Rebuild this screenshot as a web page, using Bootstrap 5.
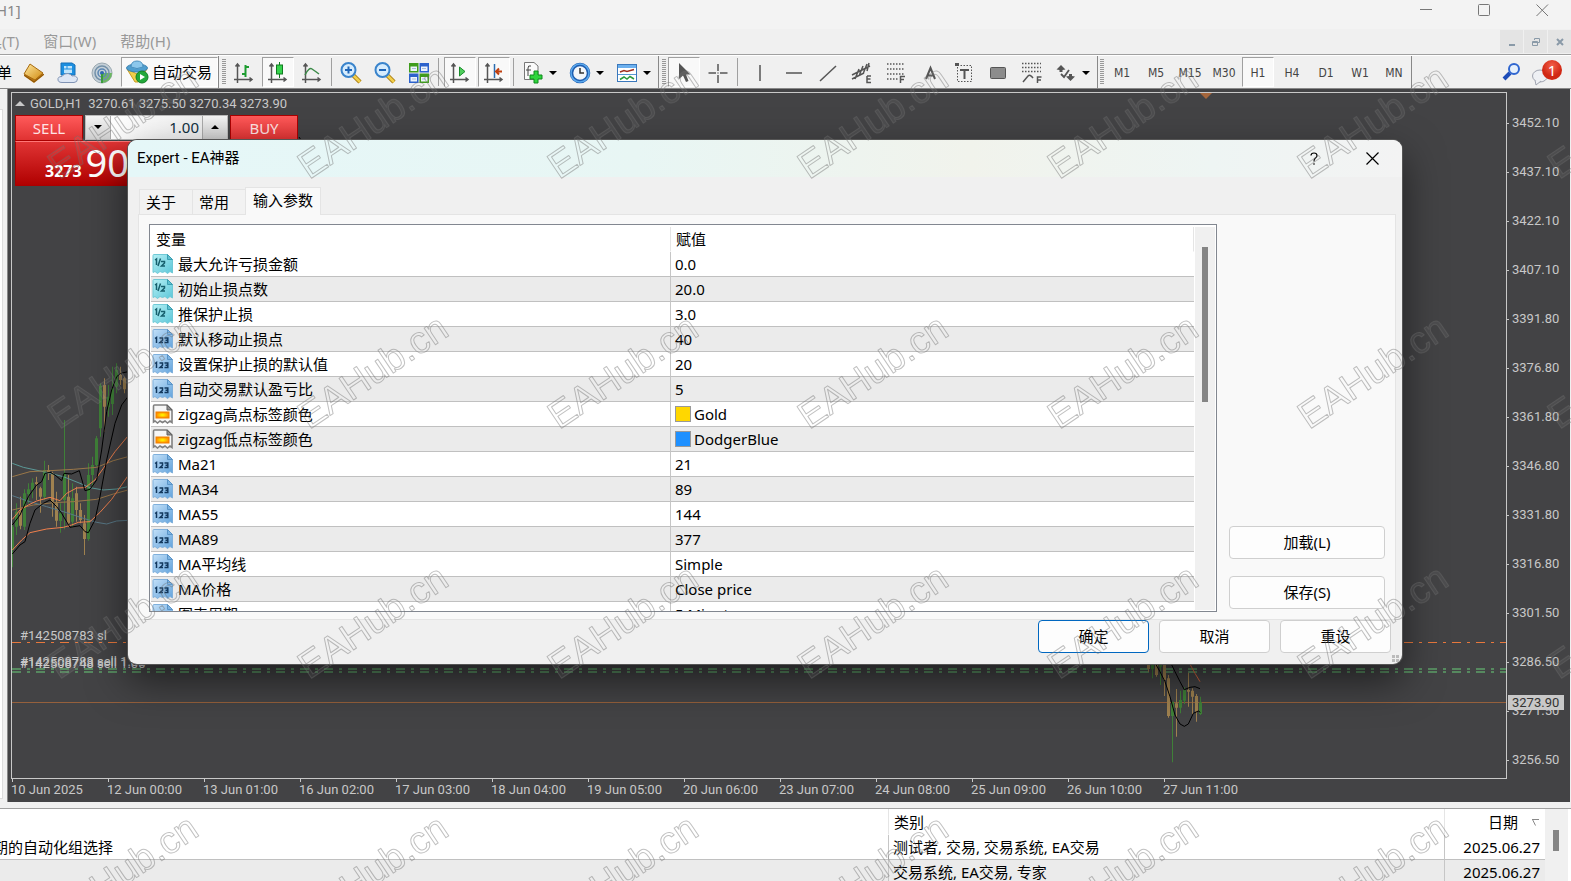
<!DOCTYPE html>
<html lang="zh-CN">
<head>
<meta charset="utf-8">
<meta name="viewport" content="width=device-width, initial-scale=1">
<title>GOLD,H1</title>
<link href="https://cdn.jsdelivr.net/npm/bootstrap@5.3.0/dist/css/bootstrap.min.css" rel="stylesheet">
<style>
:root { --ui: "Noto Sans", "Noto Sans CJK SC", sans-serif; --axis: Roboto, "Noto Sans CJK SC", sans-serif; --line: #a0a0a0; --silver: #c8c8c8; }
body { font: 15px/20px var(--ui); background: #f0f0f0; color: #000; }
button, input { font: inherit; color: inherit; }
svg { display: block; }
.titlebar { height: 29px; background: #f3f3f3; color: #888; }
.titlebar .caption { text-indent: -4px; }
.wbtn { width: 58px; height: 20px; border: 0; background: none; padding: 0; display: grid; place-items: center; }
.menubar { height: 25px; color: #999; padding-left: 2px; gap: 24px; }
.menubar a { color: inherit; text-decoration: none; }
.menubar .cut { margin-left: -15px; }
.mdi { width: 24px; height: 24px; background: #e4e4e4; border: 1px solid #f0f0f0; border-width: 1px 0 0 1px; padding: 0; display: grid; place-items: center; }
.toolbar { height: 35px; border-top: 1px solid var(--line); border-bottom: 1px solid #888; box-shadow: inset 0 1px #fff; padding-top: 1px; }
.tool { width: 34px; height: 32px; flex: none; border: 0; background: none; padding: 2px 0 0; display: flex; align-items: center; justify-content: center; }
.tool.drop { width: 47px; gap: 4px; padding-right: 1px; }
.tool.drop::after { content: ""; border: 4px solid transparent; border-top-color: #000; border-bottom: 0; }
.tool.pressed { margin: 1px 1px; width: 32px; height: 30px; background: #f9f9f9; border: 1px solid var(--line); border-right-color: #fff; border-bottom-color: #fff; }
.tool.auto { width: 97px; margin: 1px 0 1px 2px; gap: 3px; padding: 0 2px 0 0; }
.tool.tf { font: 12px/16px "DejaVu Sans Condensed", sans-serif; color: #444; }
.vsep { width: 5px; height: 28px; flex: none; background: linear-gradient(var(--line), var(--line)) 2px 0 / 1px 100% no-repeat; }
.gend { width: 1px; align-self: stretch; flex: none; background: #888; }
.grip { width: 4px; height: 26px; margin: 0 1px 0 3px; flex: none; background: repeating-linear-gradient(#999 0 1px, #f0f0f0 1px 2px); }
.edge { width: 8px; border-right: 1px solid #888; padding: 20px 0 3px; }
.edge div { width: 3px; height: 100%; background: #fff; border: 1px solid #ddd; border-left: 0; }
.chart { background: #434345; display: grid; grid-template-columns: minmax(0, 1fr) 63px; grid-template-rows: minmax(0, 1fr) 23px; padding: 3px 0 0 3px; font: 13px/16px var(--axis); color: var(--silver); margin-right: 1px; }
.plot { border: 1px solid var(--silver); position: relative; overflow: hidden; }
.plot > svg { position: absolute; inset: 0; width: 100%; height: 100%; }
.plot text { fill: var(--silver); font: 13px var(--axis); }
.quote { height: 22px; padding: 0 3px; gap: 5px; position: relative; white-space: pre; }
.quote::before { content: ""; border: 5px solid transparent; border-bottom-color: var(--silver); border-top: 0; }
.trade { position: relative; padding-left: 3px; }
.deal { width: 68px; height: 26px; border: 1px solid #a00; background: linear-gradient(#ff5a5a, #e03232); color: #ffe3e3; padding: 0; font: 15px/20px var(--ui); }
.spin { width: 143px; height: 25px; border: 1px solid #bbb; margin: 0 2px; }
.spin button { width: 24px; border: 0; background: linear-gradient(#f4f4f4, #cfcfcf); padding: 0; display: grid; place-items: center; }
.spin input { min-width: 0; flex: 1; border: 1px solid #aaa; border-width: 0 1px; background: linear-gradient(90deg, #fff, #eee); text-align: right; padding: 0 3px; color: #103040; font: 15px/20px var(--ui); }
.bid { width: 141px; height: 45px; background: linear-gradient(#e03434, #b00000); border: 1px solid #a00; border-top-color: #f77; color: #fff; padding: 0 0 0 29px; gap: 4px; }
.bid b { font: 700 16px/20px var(--ui); padding-top: 20px; line-height: 19px; }
.bid span { font: 38px/40px var(--ui); }
.prices { padding-top: 7px; position: relative; }
.prices li { height: 49px; padding-left: 5px; position: relative; display: flex; align-items: center; }
.prices li::before { content: ""; position: absolute; left: 0; top: 24px; width: 2px; height: 1px; background: var(--silver); }
.last { position: absolute; top: 603px; left: 1px; width: 56px; background: var(--silver); color: #333; padding-left: 4px; line-height: 15px; }
.times { grid-column: 1 / -1; overflow: hidden; }
.times li { width: 96px; flex: none; position: relative; padding-top: 3px; white-space: nowrap; }
.times li::before { content: ""; position: absolute; left: 1px; top: 0; width: 1px; height: 3px; background: var(--silver); }
.library { height: 73px; margin-top: 6px; border-top: 1px solid var(--line); background: #fff; overflow: hidden; }
.library table, .params { table-layout: fixed; width: 100%; border-collapse: separate; border-spacing: 0; }
.library th, .library td, .params th, .params td { font-weight: 400; padding: 0 4px; height: 25px; line-height: 24px; white-space: nowrap; overflow: hidden; border-bottom: 1px solid #c0c0c0; }
.library th, .params th { border-bottom-color: transparent; padding: 0 5px; }
.library th { height: 26px; padding-top: 1px; }
.library td + td, .library th + th, .params th + th, .params td + td { border-left: 1px solid #c6c6c6; }
.library th + th { border-left-color: #e5e5e5; }
.library td.text-end { padding-right: 5px; }
.library tbody tr:nth-child(even), .params tbody tr:nth-child(even) { background: #ebebeb; }
.library .cut { text-indent: -11px; }
.barcol { width: 26px; background: #f0f0f0; padding: 21px 0 0 8px; border-right: 3px solid #fff; }
.barcol div { width: 6px; height: 21px; background: #858585; }
.dialog { position: absolute; top: 140px; left: 128px; right: 169px; background: #f0f0f0; border-radius: 9px; box-shadow: 0 0 0 1px #555, 0 16px 40px rgba(0, 0, 0, .55); overflow: hidden; }
.dlg-head { height: 37px; padding: 0 1px 1px 9px; font: 15px/20px var(--axis); background: linear-gradient(90deg, #e5f7f8 0, #e8f6f4 40%, #f1f3ec 66%, #eef5f3 85%, #f3f3f3); }
.dlg-head button { width: 58px; height: 32px; border: 0; background: none; padding: 0; display: grid; place-items: center; }
.dlg-body { padding: 10px 6px 0 10px; }
.tabs { padding-left: 1px; }
.tabs button { border: 1px solid #e4e4e4; border-bottom: 0; background: #f2f2f2; height: 25px; width: 54px; padding: 0 0 0 6px; text-align: left; margin-right: -1px; line-height: 22px; }
.tabs button.active { background: #f9f9f9; height: 28px; width: 76px; margin-bottom: -1px; position: relative; padding: 0 0 4px 7px; }
.pane { background: #f9f9f9; border: 1px solid #e4e4e4; padding: 9px 10px 7px; gap: 12px; }
.list { height: 388px; border: 1px solid #828790; background: #fff; padding: 2px 1px 1px; overflow: hidden; }
.params th:first-child { width: 519px; }
.params td:first-child { padding-left: 1px; }
.params .nm { display: flex; align-items: center; gap: 4px; height: 24px; }
.params .nm svg { width: 22px; height: 20px; flex: none; }
.swatch { width: 16px; height: 16px; border: 1px solid #999; display: inline-block; vertical-align: -2px; margin-right: 3px; }
.params thead th:last-child { border-left-color: #e5e5e5; border-right: 1px solid #e5e5e5; }
.scroll { width: 20px; flex: none; background: #f0f0f0; margin-left: 1px; padding: 20px 0 0 7px; }
.scroll div { width: 6px; height: 155px; background: #858585; }
.side { width: 156px; flex: none; gap: 17px; padding-bottom: 3px; }
.push { height: 33px; border: 1px solid #cfcfcf; border-radius: 4px; background: #fdfdfd; padding: 0 0 2px; }
.push.def { border-color: #0067c0; }
.dlg-foot { padding: 0 11px 11px; gap: 10px; }
.dlg-foot .push { width: 111px; }
.sizer { position: absolute; right: 2px; bottom: 1px; }
.stamp { position: absolute; inset: 0; width: 100%; height: 100%; pointer-events: none; }
.stamp text { font: 38px "Liberation Sans", sans-serif; fill: rgba(255, 255, 255, .05); stroke: rgba(105, 105, 105, .42); stroke-width: 1; stroke-linejoin: round; }
</style>
<script src="https://cdn.jsdelivr.net/npm/bootstrap@5.3.0/dist/js/bootstrap.bundle.min.js"></script>
</head>
<body class="vh-100 d-flex flex-column overflow-hidden position-relative">

<svg width="0" height="0" class="position-absolute" aria-hidden="true">
  <defs>
    <linearGradient id="gBlue" x1="0" y1="0" x2="1" y2="1"><stop offset="0" stop-color="#c3e0f8"/><stop offset="1" stop-color="#62a3dc"/></linearGradient>
    <linearGradient id="gCyan" x1="0" y1="0" x2="1" y2="1"><stop offset="0" stop-color="#b4f0f5"/><stop offset="1" stop-color="#5cc6d8"/></linearGradient>
    <linearGradient id="gGold" x1="0" y1="0" x2="1" y2="1"><stop offset="0" stop-color="#ffe9a0"/><stop offset="1" stop-color="#d08a10"/></linearGradient>
    <radialGradient id="gSun"><stop offset="0" stop-color="#ff0"/><stop offset="1" stop-color="#ff8a00"/></radialGradient>
    <radialGradient id="gRed" cy=".3"><stop offset="0" stop-color="#f4604a"/><stop offset="1" stop-color="#d02814"/></radialGradient>
    <symbol id="i123" viewBox="0 0 22 20">
      <path d="M1 1.500Q1 .5 2 .5H15.500L20.500 5.500V19L18 17.500 15.500 19.500 13 17.500 10.500 18.500 8 17.500 5.500 19.500 3 17.500 1 18.500Z" fill="url(#gBlue)" stroke="#7fb0dc"/>
      <path d="M15.500 .5V5.500H20.500Z" fill="#7db4e2" stroke="#5a94c8"/>
      <path d="M3 9.500 4.500 8.500V14M7.500 9H10.500V11.200L8 13.500H11M12.500 9H15.800V13.500H12.500M13.500 11.200H15.500" fill="none" stroke="#12385e" stroke-width="1.500"/>
    </symbol>
    <symbol id="iHalf" viewBox="0 0 22 20">
      <path d="M1 1.500Q1 .5 2 .5H15.500L20.500 5.500V19L18 17.500 15.500 19.500 13 17.500 10.500 18.500 8 17.500 5.500 19.500 3 17.500 1 18.500Z" fill="url(#gCyan)" stroke="#6fc9d6"/>
      <path d="M15.500 .5V5.500H20.500Z" fill="#5fc0d0" stroke="#3a9fb2"/>
      <path d="M3 6 4.500 5V11M8.500 4.500 6 12M9 7.500H12.500V9L9.500 12H13" fill="none" stroke="#17606e" stroke-width="1.500"/>
    </symbol>
    <symbol id="iColor" viewBox="0 0 22 20">
      <path d="M1.500 2Q1.500 1 2.500 1H15L20 6V18.500L18 17 15.500 19 13 17 10.500 18.500 8 17 5.500 19 3 17 1.500 18Z" fill="#f6f6f6" stroke="#808080" stroke-width="1.600"/>
      <path d="M15 1V6H20Z" fill="#909090" stroke="#606060"/>
      <rect x="4" y="8" width="13" height="6" fill="url(#gSun)" stroke="#f08000"/>
    </symbol>
    <symbol id="axes" viewBox="0 0 24 24"><path d="M5.500 3V22M2 18.500H20M3.500 5.500 5.500 3 7.500 5.500M17.500 16.500 20 18.500 17.500 20.500" fill="none" stroke="#555" stroke-width="1.500"/></symbol>
  </defs>
</svg>

<header class="titlebar d-flex justify-content-between">
  <span class="caption">H1]</span>
  <div class="d-flex">
    <button class="wbtn" aria-label="最小化"><svg width="12" height="12" stroke="#777"><path d="M0 5.500H12"/></svg></button>
    <button class="wbtn" aria-label="最大化"><svg width="13" height="13" fill="none" stroke="#777"><rect x=".5" y=".5" width="11" height="11" rx="1"/></svg></button>
    <button class="wbtn" aria-label="关闭"><svg width="13" height="13" stroke="#777"><path d="M.5 .5 12 12M12 .5 .5 12"/></svg></button>
  </div>
</header>

<nav class="menubar d-flex align-items-center">
  <a href="#" class="cut">具(T)</a><a href="#">窗口(W)</a><a href="#">帮助(H)</a>
  <div class="d-flex ms-auto">
    <button class="mdi" aria-label="最小化"><svg width="10" height="10"><path d="M2 8H8" stroke="#8a9aa8" stroke-width="2"/></svg></button>
    <button class="mdi" aria-label="还原"><svg width="10" height="10" fill="none" stroke="#8a9aa8"><path d="M3.500 3V1.500H8.500V5.500H7M1 5.500H6.500V8.500H1.500V4.500H6.500V6"/></svg></button>
    <button class="mdi" aria-label="关闭"><svg width="10" height="10"><path d="M2 2 8 8M8 2 2 8" stroke="#8a9aa8" stroke-width="2"/></svg></button>
  </div>
</nav>

<div class="toolbar d-flex align-items-center overflow-hidden flex-shrink-0">
  <span class="flex-shrink-0" style="width:17px;text-indent:-3px">单</span>
  <button class="tool" aria-label="历史"><svg width="24" height="24"><path d="M8 4 22 14 12 22 2 15Z" fill="#b87410"/><path d="M8 3 21 12 13 19 2 13Z" fill="url(#gGold)" stroke="#a86a10"/><path d="M2 14 12 21 22 13" fill="none" stroke="#8a5408"/></svg></button>
  <button class="tool" aria-label="云"><svg width="24" height="24"><path d="M5 2H16L19 4V14H5Z" fill="#1c8fe0" stroke="#1670b8"/><path d="M8 5H16V12H8Z" fill="#bfe4fb"/><path d="M8 8H16M11 5V8" stroke="#1c8fe0"/><path d="M6 21.500Q1.500 21.500 2 17.500 3 15 6 15.500 8 12 12 12.500 15 13 16 15 20 14 21.500 17.500 21.500 21.500 18 21.500Z" fill="#dde6f4" stroke="#8093b4"/></svg></button>
  <button class="tool" aria-label="信号"><svg width="24" height="24" fill="none"><circle cx="12" cy="12" r="10" fill="#c5d0d8" stroke="#9aa8b0"/><path d="M12 12H22A10 10 0 0 1 12 22Z" fill="#6cb860"/><circle cx="12" cy="12" r="7" stroke="#7390a8" stroke-width="1.500"/><circle cx="12" cy="12" r="4" stroke="#5a86b4" stroke-width="1.500"/><circle cx="12" cy="12" r="2" fill="#2f66b0"/><path d="M12 13V22" stroke="#3c9c3c" stroke-width="2"/></svg></button>
  <button class="tool pressed auto"><svg width="24" height="24"><path d="M2 9 12 14 22 9 13 22H10Z" fill="#f0cf4c" stroke="#c89c20"/><ellipse cx="12" cy="8" rx="10.500" ry="4" fill="#4f9ecf" stroke="#3a7fae"/><path d="M6 7Q6 1 12 1T18 7Q12 10 6 7Z" fill="#8cc8ec" stroke="#4a90be"/><circle cx="17" cy="17" r="6" fill="#22a83a" stroke="#128024"/><path d="M15 14V20L20 17Z" fill="#fff"/></svg>自动交易</button>
  <i class="gend"></i><i class="grip"></i>
  <button class="tool" aria-label="柱状图"><svg width="24" height="24"><use href="#axes"/><path d="M13.500 4V16M10 13H13M14 6H17" stroke="#1d9c30" stroke-width="2"/></svg></button>
  <button class="tool pressed" aria-label="蜡烛图"><svg width="24" height="24"><use href="#axes"/><path d="M13.500 1V17" stroke="#117a20"/><rect x="10.500" y="4" width="6" height="9" fill="#35d24c" stroke="#117a20"/></svg></button>
  <button class="tool" aria-label="折线图"><svg width="24" height="24"><use href="#axes"/><path d="M5 14Q9 6 12 8T19 13" fill="none" stroke="#3c8a48" stroke-width="1.500"/></svg></button>
  <i class="vsep"></i>
  <button class="tool" aria-label="放大"><svg width="24" height="24"><path d="M14 14 21 21" stroke="#a87c10" stroke-width="4.500"/><path d="M14 14 21 21" stroke="#f2cf4a" stroke-width="2.500"/><circle cx="9.500" cy="9" r="7" fill="#d6ecfd" stroke="#3a84cc" stroke-width="2"/><path d="M6 9H13M9.500 5.500V12.500" stroke="#1f66b8" stroke-width="2"/></svg></button>
  <button class="tool" aria-label="缩小"><svg width="24" height="24"><path d="M14 14 21 21" stroke="#a87c10" stroke-width="4.500"/><path d="M14 14 21 21" stroke="#f2cf4a" stroke-width="2.500"/><circle cx="9.500" cy="9" r="7" fill="#d6ecfd" stroke="#3a84cc" stroke-width="2"/><path d="M6 9H13" stroke="#1f66b8" stroke-width="2"/></svg></button>
  <button class="tool" aria-label="平铺"><svg width="24" height="24"><path d="M2 2H11.500V11.500H2ZM12.500 12.500H22V22H12.500Z" fill="#3f9c1c"/><path d="M12.500 2H22V11.500H12.500ZM2 12.500H11.500V22H2Z" fill="#2c62cc"/><path d="M3.500 5.500H10V10H3.500ZM14 5.500H20.500V10H14ZM3.500 16H10V20.500H3.500ZM14 16H20.500V20.500H14Z" fill="#eef4fc"/><path d="M5 7.500H9M15 7.500H19M5 18H9M15 18H19" stroke="#a8bcd8"/></svg></button>
  <i class="vsep"></i><i style="width:2px"></i>
  <button class="tool pressed" aria-label="自动滚动"><svg width="24" height="24"><use href="#axes"/><path d="M11.500 6V15L17 10.500Z" fill="#4fce5c" stroke="#1a8c2c"/></svg></button>
  <button class="tool pressed" aria-label="图表平移"><svg width="24" height="24"><use href="#axes"/><path d="M12.500 3V17" stroke="#2a6cb0" stroke-width="1.500"/><path d="M20 10.500H15M17 7.500 14 10.500 17 13.500" fill="none" stroke="#c04010" stroke-width="2"/></svg></button>
  <i class="vsep"></i>
  <button class="tool drop" aria-label="指标"><svg width="24" height="24"><path d="M3.500 1.500H13L17 5V18.500H3.500Z" fill="#fafafa" stroke="#777"/><path d="M10 5Q7 4 7 7V15M5 9H10" fill="none" stroke="#444"/><path d="M13 10H17V14H21V18H17V22H13V18H9V14H13Z" fill="#2fd53c" stroke="#0f8a1c"/></svg></button>
  <button class="tool drop" aria-label="周期"><svg width="24" height="24"><circle cx="12" cy="12" r="8.500" fill="#f2f6fa" stroke="#1c5cb0" stroke-width="3.500"/><circle cx="12" cy="12" r="9" fill="none" stroke="#5aa8ec" stroke-width="1.500"/><path d="M12 7V12H16" fill="none" stroke="#333" stroke-width="1.500"/></svg></button>
  <button class="tool drop" aria-label="模板"><svg width="24" height="24"><rect x="2.500" y="3.500" width="19" height="17" fill="#fff" stroke="#3a78bc"/><path d="M3 4H21V7H3Z" fill="#6cb0ee"/><path d="M3 13.500H21" stroke="#5a98d4"/><path d="M5 11 9 9.500 12 10.500 19 8.500" fill="none" stroke="#a03020" stroke-width="1.500"/><path d="M5 18.500 9 16 12 18 15 15.500 19 18" fill="none" stroke="#2c9a3c" stroke-width="1.500"/></svg></button>
  <i style="width:1px"></i><i class="gend"></i><i class="grip"></i>
  <button class="tool pressed" aria-label="光标"><svg width="24" height="24"><path d="M7 2V18L11 14.500 14 21 16.500 20 14 13.500H18.500Z" fill="#555"/></svg></button>
  <button class="tool" aria-label="十字线"><svg width="24" height="24" stroke="#555" stroke-width="1.500"><path d="M12 3V10M12 14V22M2.500 12H10M14 12H21.500M12 11.500V12.500"/></svg></button>
  <i class="vsep"></i><i style="width:3px"></i>
  <button class="tool" aria-label="垂直线"><svg width="24" height="24" stroke="#555" stroke-width="1.500"><path d="M12 4V20"/></svg></button>
  <button class="tool" aria-label="水平线"><svg width="24" height="24" stroke="#555" stroke-width="1.500"><path d="M4 12H20"/></svg></button>
  <button class="tool" aria-label="趋势线"><svg width="24" height="24" stroke="#555" stroke-width="1.500"><path d="M4 20 20 5"/></svg></button>
  <button class="tool" aria-label="等距通道"><svg width="24" height="24" fill="none" stroke="#555" stroke-width="1.500"><path d="M2 14 20 5M2 18 14 12M5 18 9 8M9 15 13 5M13 13 17 3M17 10 19 2M17 15H21M17 15V21.500H21M17 18H20.500"/></svg></button>
  <button class="tool" aria-label="斐波那契"><svg width="24" height="24" fill="none" stroke="#555" stroke-width="1.500"><path d="M3 3H20M3 8H20M3 13H20M3 18H14" stroke-dasharray="1.500 1.500"/><path d="M16.500 22V15.500H21M16.500 18.500H20"/></svg></button>
  <button class="tool" aria-label="文字"><svg width="24" height="24" fill="none" stroke="#555" stroke-width="2"><path d="M8 18 12.500 7 17 18M9.500 14.500H15.500"/></svg></button>
  <button class="tool" aria-label="文本标签"><svg width="24" height="24" fill="none" stroke="#555"><path d="M5.500 4.500H19.500V20.500H5.500Z" stroke-dasharray="1.500 1.500"/><path d="M8 9H17M12.500 9V18" stroke-width="2"/><path d="M3 2H7V5H3Z" fill="#555" stroke="none"/></svg></button>
  <button class="tool" aria-label="矩形"><svg width="24" height="24"><rect x="4.500" y="6.500" width="15" height="11" rx="1" fill="#8c8c8c" stroke="#555"/></svg></button>
  <button class="tool" aria-label="斐波扩展"><svg width="24" height="24" fill="none" stroke="#555" stroke-width="1.500"><path d="M2 2.500H21M2 6.500H21M2 10.500H21" stroke-dasharray="1.500 1.500"/><path d="M3 21 8 15Q10 13 13 17M17.500 22V16H21.500M17.500 19H21"/></svg></button>
  <button class="tool drop" aria-label="箭头"><svg width="24" height="24"><path d="M7 4 11.500 8.500 8.500 9V11H5.500V9L2.500 8.500ZM16.500 20 21 15.500 18 15V13H15V15L12 15.500Z" fill="#555"/><path d="M7 13 10 16 15 9" fill="none" stroke="#555" stroke-width="1.800"/></svg></button>
  <i style="width:1px"></i><i class="gend"></i><i class="grip" style="margin-left:2px"></i>
  <button class="tool tf">M1</button><button class="tool tf">M5</button><button class="tool tf">M15</button><button class="tool tf">M30</button><button class="tool tf pressed">H1</button><button class="tool tf">H4</button><button class="tool tf">D1</button><button class="tool tf">W1</button><button class="tool tf">MN</button>
  <i class="gend"></i>
  <button class="tool ms-auto" aria-label="搜索"><svg width="24" height="24"><path d="M10 12 4 18" stroke="#1d4cb8" stroke-width="4"/><circle cx="14" cy="8" r="5" fill="#e6f0fc" stroke="#2f66d0" stroke-width="2"/></svg></button>
  <button class="tool position-relative me-2" aria-label="通知"><svg width="32" height="30"><ellipse cx="10" cy="18" rx="7.500" ry="6" fill="#eef0f4" stroke="#a0a4b0"/><path d="M5 22 6 27 11 23" fill="#eef0f4" stroke="#a0a4b0"/><circle cx="22" cy="12" r="10" fill="url(#gRed)"/><text x="22" y="18" text-anchor="middle" font-size="15" fill="#fff" font-family="Noto Sans">1</text></svg></button>
</div>

<main class="d-flex flex-grow-1" style="min-height:0">
  <div class="edge"><div></div></div>
  <section class="chart flex-grow-1">
    <div class="plot">
      <svg aria-label="GOLD,H1">
        <path d="M1188 0H1200L1194 6Z" fill="#a5663c"/>
        <path d="M0 549.500H3000" stroke="#e8783c" stroke-dasharray="9 6 3 6"/>
        <path d="M0 576H3000M0 579H3000" stroke="#56895f" stroke-width="2" stroke-dasharray="9 6 3 6"/>
        <path d="M0 609.500H3000" stroke="#95603c"/>
        <text x="8" y="547">#142508783 sl</text>
        <text x="8" y="573">#142508783 sell 1.00</text>
        <text x="8" y="575">#142508748 sell 1.00</text>
        <path d="M287 44 291 50" stroke="#000"/>
        <g id="leftBars" transform="translate(-12 237) scale(.33333)"></g>
        <g transform="translate(-12 237) scale(.33333)" fill="none" stroke-width="3">
          <path d="M37 400 70 412 130 425 190 440 240 460 270 473 310 480 350 477 384 470" stroke="#5b9a98"/>
          <path d="M37 440 90 425 150 422 220 418 290 412 340 392 384 380M37 540 100 525 160 518 220 515 290 508 340 492 384 480" stroke="#9b7748"/>
          <path d="M37 497 80 512 140 530 200 548 250 565 290 577 320 582 350 573 384 571" stroke="#587888"/>
          <path d="M37 568 60 540 85 525 110 513 150 502 180 512 200 490 230 474 255 473 285 450 310 415 345 365 384 318M37 660 65 630 90 608 140 597 190 592 215 585 235 577 270 575 300 547 335 508 384 437" stroke="#f0804c"/>
          <path d="M37 585 60 555 85 500 110 465 125 455 135 430 150 427 165 435 185 452 192 430 215 432 238 422 255 482 270 478 290 450 305 360 320 245 335 180 350 140 362 130 384 125M37 672 60 645 75 635 90 580 105 540 130 520 150 510 170 530 185 550 210 592 240 587 255 605 265 608 285 570 300 500 320 390 345 280 365 225 384 200" stroke="#000"/>
        </g>
        <g id="rightBars" transform="translate(1118 507) scale(.33333)"></g>
        <g transform="translate(1118 507) scale(.33333)" fill="none" stroke-width="3">
          <path d="M70 180 90 215 105 245 120 290 135 345 150 372 163 379 175 372 190 340 205 333 211 337M118 180 135 215 150 245 163 269 180 262 195 260 210 266" stroke="#000"/>
          <path d="M176 185 195 220 210 245" stroke="#d8643c"/>
        </g>
      </svg>
      <div class="quote d-flex align-items-center"><span>GOLD,H1  3270.61 3275.50 3270.34 3273.90</span></div>
      <div class="trade">
        <div class="d-flex">
          <button class="deal">SELL</button>
          <div class="spin d-flex"><button aria-label="减少"><svg width="8" height="4"><path d="M0 0H8L4 4Z"/></svg></button><input type="text" value="1.00" aria-label="手数"><button aria-label="增加"><svg width="8" height="4"><path d="M0 4H8L4 0Z"/></svg></button></div>
          <button class="deal">BUY</button>
        </div>
        <div class="bid d-flex"><b>3273</b><span>90</span></div>
      </div>
    </div>
    <div class="position-relative">
      <ul class="prices list-unstyled mb-0"><li>3452.10</li><li>3437.10</li><li>3422.10</li><li>3407.10</li><li>3391.80</li><li>3376.80</li><li>3361.80</li><li>3346.80</li><li>3331.80</li><li>3316.80</li><li>3301.50</li><li>3286.50</li><li>3271.50</li><li>3256.50</li></ul>
      <div class="last">3273.90</div>
    </div>
    <ul class="times d-flex list-unstyled mb-0"><li>10 Jun 2025</li><li>12 Jun 00:00</li><li>13 Jun 01:00</li><li>16 Jun 02:00</li><li>17 Jun 03:00</li><li>18 Jun 04:00</li><li>19 Jun 05:00</li><li>20 Jun 06:00</li><li>23 Jun 07:00</li><li>24 Jun 08:00</li><li>25 Jun 09:00</li><li>26 Jun 10:00</li><li>27 Jun 11:00</li></ul>
  </section>
</main>

<section class="library d-flex flex-shrink-0">
  <table>
    <colgroup><col><col style="width:556px"><col style="width:101px"></colgroup>
    <thead><tr><th></th><th>类别</th><th class="text-end"><span class="d-inline-flex align-items-center" style="gap:13px">日期 <svg width="9" height="9" fill="none" stroke="#888"><path d="M1 1.500H8M1.500 1.500 4.500 7.500"/></svg></span></th></tr></thead>
    <tbody>
      <tr><td class="cut">期的自动化组选择</td><td>测试者, 交易, 交易系统, EA交易</td><td class="text-end">2025.06.27</td></tr>
      <tr><td></td><td>交易系统, EA交易, 专家</td><td class="text-end">2025.06.27</td></tr>
    </tbody>
  </table>
  <div class="barcol flex-shrink-0"><div></div></div>
</section>

<div class="dialog" role="dialog" aria-label="Expert - EA神器">
  <div class="dlg-head d-flex align-items-center"><span class="me-auto">Expert - EA神器</span>
    <button aria-label="帮助"><svg width="8" height="13" fill="none" stroke="#000" stroke-width="1.200"><path d="M1 3.500Q1 1 4 1T7 3.500Q7 5 5 6.500 4 7.500 4 9.500M4 11.300V12.700"/></svg></button>
    <button aria-label="关闭"><svg width="13" height="13" stroke="#000" stroke-width="1.200"><path d="M.5 .5 12.500 12.500M12.500 .5 .5 12.500"/></svg></button>
  </div>
  <div class="dlg-body">
    <div class="tabs d-flex align-items-end" role="tablist"><button role="tab">关于</button><button role="tab">常用</button><button role="tab" class="active">输入参数</button></div>
    <div class="pane d-flex">
      <div class="list d-flex flex-grow-1">
        <table class="params align-self-start">
          <thead><tr><th>变量</th><th>赋值</th></tr></thead>
          <tbody id="rows"></tbody>
        </table>
        <div class="scroll"><div></div></div>
      </div>
      <div class="side d-flex flex-column justify-content-end"><button class="push">加载(L)</button><button class="push">保存(S)</button></div>
    </div>
  </div>
  <div class="dlg-foot d-flex justify-content-end"><button class="push def">确定</button><button class="push">取消</button><button class="push">重设</button></div>
  <svg class="sizer" width="8" height="8" fill="#bbb"><path d="M0 0H3V3H0ZM4 0H7V3H4ZM0 4H3V7H0ZM4 4H7V7H4Z"/></svg>
</div>

<svg class="stamp" aria-hidden="true">
  <defs><pattern id="mark250" width="250" height="250" patternUnits="userSpaceOnUse"><text transform="translate(59 180) rotate(-34)">EAHub.cn</text></pattern></defs>
  <rect width="100%" height="100%" fill="url(#mark250)"/>
</svg>

<script>
const params = [
  ["iHalf", "最大允许亏损金额", "0.0"], ["iHalf", "初始止损点数", "20.0"], ["iHalf", "推保护止损", "3.0"],
  ["i123", "默认移动止损点", "40"], ["i123", "设置保护止损的默认值", "20"], ["i123", "自动交易默认盈亏比", "5"],
  ["iColor", "zigzag高点标签颜色", "Gold", "#ffd700"], ["iColor", "zigzag低点标签颜色", "DodgerBlue", "#1e90ff"],
  ["i123", "Ma21", "21"], ["i123", "MA34", "89"], ["i123", "MA55", "144"], ["i123", "MA89", "377"],
  ["i123", "MA平均线", "Simple"], ["i123", "MA价格", "Close price"], ["i123", "图表周期", "5 Minutes"]
];
document.getElementById("rows").innerHTML = params.map(([icon, name, value, color]) =>
  `<tr><td><span class="nm"><svg><use href="#${icon}"/></svg>${name}</span></td><td>${color ? `<i class="swatch" style="background:${color}"></i>` : ""}${value}</td></tr>`).join("");

// Each bar: direction (1 up, 0 down), high, low, body top, body bottom
const left = [[1,585,712,590,660],[1,520,615,545,590],[0,500,598,545,587],[1,478,600,490,590],[1,460,520,478,492],[1,445,505,458,480],[0,440,510,457,462],[0,470,548,475,500],[1,392,510,420,500],[0,405,450,420,430],[0,425,560,430,515],[0,485,590,520,572],[1,520,608,550,573],[1,270,598,430,510],[0,435,590,500,580],[1,460,590,505,575],[0,470,575,490,540],[0,520,580,540,570],[0,555,675,580,627],[1,400,632,435,627],[1,380,470,405,435],[1,318,410,325,405],[1,160,320,167,295],[0,145,305,165,230],[1,165,260,200,232],[1,110,255,175,222],[1,100,190,120,170],[0,110,165,135,150],[0,140,190,145,178]];
const right = [[0,180,216,180,207],[1,180,235,180,208],[0,180,230,180,225],[1,180,255,180,200],[0,180,288,180,240],[0,225,353,235,348],[1,305,487,305,348],[0,267,410,310,323],[1,272,340,300,323],[1,262,312,270,302],[0,218,320,270,275],[0,265,343,272,290],[0,282,365,288,335],[1,290,345,307,342]];
function bars(id, data, x0) {
  document.getElementById(id).innerHTML = data.map(([up, hi, lo, a, b], k) => {
    const x = x0 + 12 * k;
    return `<path fill="${up ? "#3f8038" : "#a08250"}" d="M${x} ${hi}h3v${lo - hi}h-3zM${x - 3} ${a}h9v${b - a}h-9z"/>`;
  }).join("");
}
bars("leftBars", left, 36);
bars("rightBars", right, 54);
</script>
</body>
</html>
